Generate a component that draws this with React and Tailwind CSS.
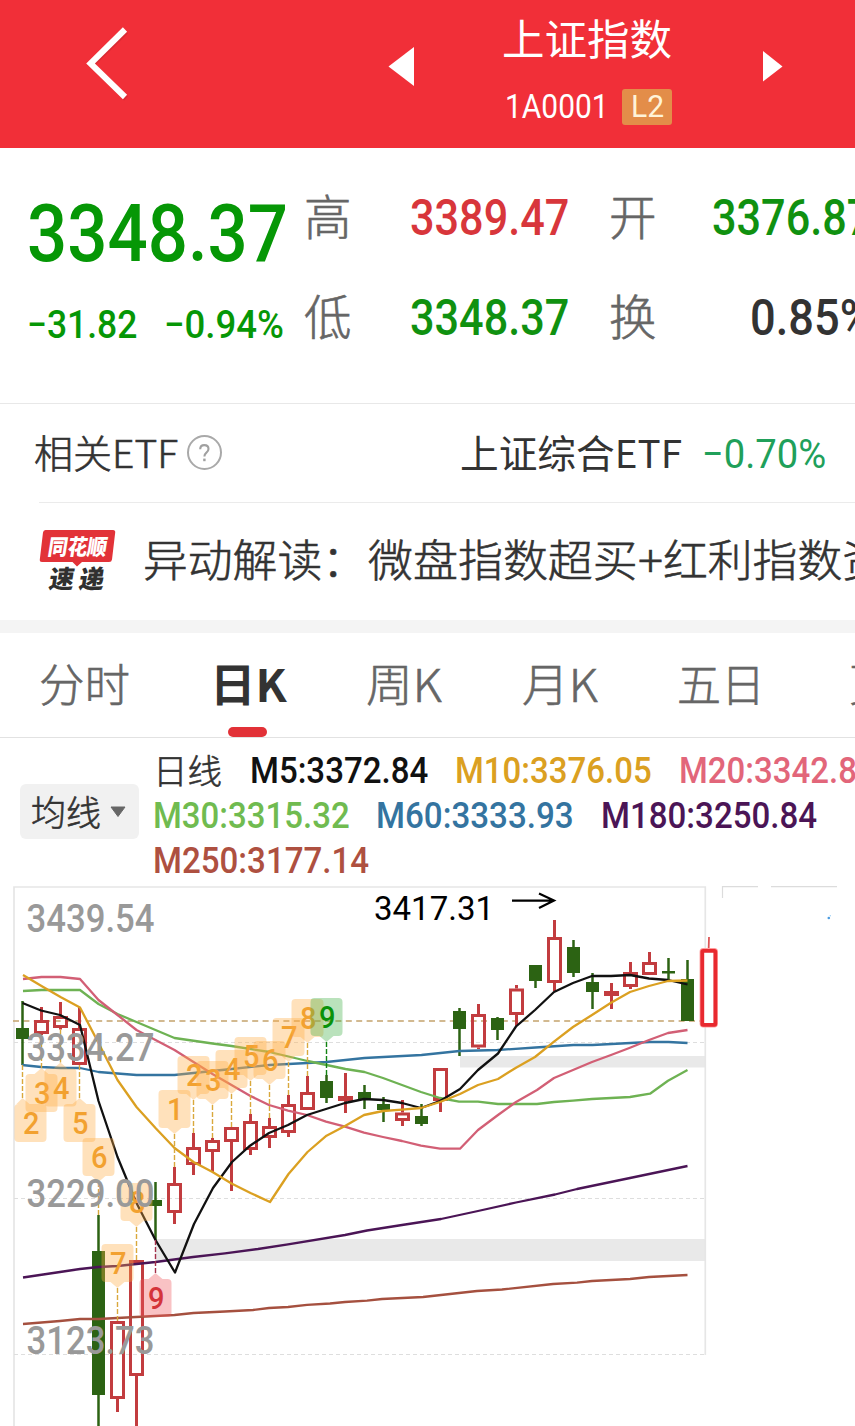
import { useLayoutEffect, useRef } from "react";

// Text stretched or narrowed to fill the width of its own box.
function Fit({ className = "", children }) {
  const box = useRef(null);
  const text = useRef(null);
  useLayoutEffect(() => {
    const ratio = box.current.clientWidth / text.current.offsetWidth;
    text.current.style.transform = `scaleX(${ratio})`;
  }, [children]);
  return (
    <span className={`block shrink-0 whitespace-nowrap ${className}`}>
      <span ref={box} className="block w-full">
        <span ref={text} className="inline-block origin-left whitespace-pre align-top">{children}</span>
      </span>
    </span>
  );
}

const NUM = "font-[Roboto,'Noto_Sans_CJK_SC',sans-serif]";
// A weight between light and regular.
const THIN = "font-light [-webkit-text-stroke:0.6px_currentColor]";

const RED = "#c23c3f";
const GREEN = "#2c6313";
const step = (i) => 22.5 + 19 * i;

// [kind, high, body top, body bottom, low]
const candles = [
  ["g", 1001, 1028, 1039, 1065], ["r", 1007, 1020, 1034, 1035], ["r", 1002, 1016, 1028, 1029.5],
  ["r", 1007, 1028, 1065, 1065], ["g", 1215, 1251, 1395, 1430], ["r", 1321, 1321, 1399, 1412],
  ["r", 1260, 1260, 1376, 1430], ["g", 1182, 1200, 1206, 1240], ["r", 1167, 1183, 1213, 1224],
  ["r", 1133, 1147, 1165, 1175], ["r", 1138, 1140, 1152, 1172], ["r", 1127, 1127, 1142, 1191],
  ["r", 1114, 1121, 1150, 1155], ["r", 1118, 1126, 1138, 1148], ["r", 1095, 1104, 1133, 1137],
  ["r", 1076, 1092, 1110, 1110], ["g", 1075, 1081, 1098, 1103], ["p", 1073, 1096, 1101, 1113],
  ["g", 1085, 1092, 1099, 1109], ["g", 1097, 1104, 1110, 1122], ["r", 1100, 1112.5, 1121, 1126],
  ["g", 1104, 1116, 1124, 1126], ["r", 1068, 1068, 1101, 1112], ["g", 1008, 1011, 1029, 1056],
  ["r", 1004, 1014, 1047.5, 1049], ["g", 1017, 1018, 1030, 1040], ["r", 985, 988.5, 1015, 1026],
  ["g", 965, 965, 981, 988], ["r", 920, 937, 983, 991], ["g", 940, 947, 973, 977],
  ["g", 973, 982, 992, 1009], ["p", 983, 991, 996, 1009], ["r", 962, 972, 987, 989],
  ["r", 952, 962, 975, 975], ["g", 958, 971, 973.5, 980], ["g", 960, 979, 1021, 1021],
];

const averages = [
  ["#a5503f", "23,1324 60,1321 80,1319 98.5,1319 136,1317 174.5,1315 193.5,1313 225,1311.5 253,1310 269,1308 288,1307 307,1304.8 330,1303.5 345,1302 367,1300.7 382,1299 423,1297 477,1291 502,1289.5 553,1284 577,1282.7 592,1281 630,1279 649,1277 687.5,1275"],
  ["#4b1556", "23,1277.5 60,1272 80,1269 98.5,1267 117.5,1266 155.5,1262 193,1257 225,1253.3 258,1249 288,1244.3 345,1235 367,1230.5 402,1225 441,1219 478,1211 516,1202.5 555,1194.5 577,1189 630,1178 687.5,1166"],
  ["#3474a0", "22,1065 41,1067 60.5,1068 80,1068 98.5,1072 136.5,1075 174.5,1075 231.5,1069 269.5,1065 326.5,1062 364.5,1058 421.5,1055 459.5,1051 497.5,1050 535.5,1047.5 573.5,1045 592.5,1045 649.5,1042 668.5,1042 687.5,1043"],
  ["#6eb253", "23,991 41.5,990 80,990 98.5,1004 117.5,1014 136.5,1022 174.5,1038 212.5,1043.5 231.5,1046 269.5,1052 307.5,1061 326.5,1065 345.5,1069 364.5,1072 383,1078 402,1085 421,1092 440,1098 459,1101.7 478,1101.7 498,1104 537,1104 554,1102 573,1100.7 592,1099 630,1097 650,1093.7 668,1080.7 687.5,1070"],
  ["#d25f75", "23,979 41.5,977 60.5,977 80,979 98.5,1000 117.5,1015 136.5,1030 155.5,1040 174.5,1050 193.5,1062 212.5,1074 231.5,1085 250,1095.7 269,1105 288,1110.7 307,1115 326,1121.7 345,1126.7 364,1132.7 383,1137 402,1141 421,1145.7 440,1148.7 460,1148.7 478,1130 498,1115 516,1102 537,1090 554,1078 573,1070 592,1062 611,1055 630,1047.7 649,1040 668,1033 687.5,1030"],
  ["#111111", "22.5,1003 41,1010.5 60,1015 80,1025 98.5,1101 117.5,1157 136.5,1203 155.5,1240 175,1272.5 194,1224 213,1188 232,1162 250,1145.7 269,1133 288,1125 307,1115 326,1109 345,1103 364,1099 383,1100 402,1103 421,1108 440,1101 460,1089 478,1070 498,1053.5 516,1026.5 535,1010 554,992 573,983 592,976 611,976 630,975 649,978.5 668,980 687.5,984.5"],
  ["#dba021", "23,975 41.5,986 60.5,997 80,1007.5 98.5,1043 117.5,1080 136.5,1107 155.5,1128 174.5,1148 193.5,1162 212.5,1172 231.5,1183.5 250.5,1193 270,1202 288.5,1174 307.5,1152 326.5,1135.7 345,1126 364,1115 383,1111 402,1109.7 421,1108 440,1102 460,1094 478,1085 498,1079 516,1067.7 535,1057 554,1041.7 573,1027 592,1015 611,1002.7 630,992 649,986 668,981 687.5,980.5"],
];

// [digit, candle index, points up, tone, sideways shift]
const marks = [
  ["2", 0, true, "o", 8], ["3", 1, true, "o"], ["4", 2, true, "o"], ["5", 3, true, "o"],
  ["6", 4, false, "o"], ["7", 5, false, "o"], ["8", 6, false, "o"], ["9", 7, true, "r"],
  ["1", 8, false, "o"], ["2", 9, false, "o"], ["3", 10, false, "o"], ["4", 11, false, "o"],
  ["5", 12, false, "o"], ["6", 13, false, "o"], ["7", 14, false, "o"], ["8", 15, false, "o"],
  ["9", 16, false, "g"],
];
const tones = {
  o: ["#ffad42", "#f2a130", "#d9a83c"],
  r: ["#ee555c", "#d4343a", "#a3304a"],
  g: ["#3fae46", "#0a920a", "#128312"],
};

function Candle({ data, x }) {
  const [kind, high, top, bottom, low] = data;
  if (kind === "g")
    return (
      <g fill={GREEN}>
        <rect x={x - 1.25} y={high} width="2.5" height={low - high} />
        <rect x={x - 6.5} y={top} width="13" height={bottom - top} />
      </g>
    );
  if (kind === "p")
    return (
      <g fill={RED}>
        <rect x={x - 1.5} y={high} width="3" height={low - high} />
        <rect x={x - 7.5} y={top} width="15" height={bottom - top} />
      </g>
    );
  return (
    <g fill={RED}>
      <rect x={x - 1.5} y={high} width="3" height={top - high} />
      <rect x={x - 1.5} y={bottom} width="3" height={low - bottom} />
      <rect x={x - 6} y={top + 1.5} width="12" height={bottom - top - 3} fill="none" stroke={RED} strokeWidth="3" />
    </g>
  );
}

function Mark({ data }) {
  const [digit, index, up, tone, shift = 0] = data;
  const x = step(index);
  const [fill, ink, dash] = tones[tone];
  const edge = up ? candles[index][4] : candles[index][1];
  const tip = up ? edge + 33 : edge - 33;
  const top = up ? tip + 6 : tip - 44;
  const l = x - 16 + shift;
  const r = x + 16 + shift;
  const b = top + 38;
  const tl = Math.max(x - 7, l + 2);
  const d = up
    ? `M${l + 4},${top} L${tl},${top} L${x},${tip} L${x + 7},${top} L${r - 4},${top} Q${r},${top} ${r},${top + 4} V${b - 4} Q${r},${b} ${r - 4},${b} H${l + 4} Q${l},${b} ${l},${b - 4} V${top + 4} Q${l},${top} ${l + 4},${top}Z`
    : `M${l + 4},${top} H${r - 4} Q${r},${top} ${r},${top + 4} V${b - 4} Q${r},${b} ${r - 4},${b} H${x + 7} L${x},${tip} L${x - 7},${b} H${l + 4} Q${l},${b} ${l},${b - 4} V${top + 4} Q${l},${top} ${l + 4},${top}Z`;
  return (
    <g>
      <line x1={x} x2={x} y1={tip} y2={edge} stroke={dash} strokeWidth="1.4" strokeDasharray="5 2" />
      <path d={d} fill={fill} fillOpacity="0.36" />
      <text x={x + shift - 7.5} y={top + 30} fontSize="31" fontWeight="500" fill={ink} textLength="16.5" lengthAdjust="spacingAndGlyphs">{digit}</text>
    </g>
  );
}

function Chart() {
  const scale = [["3439.54", 932], ["3334.27", 1061], ["3229.00", 1207], ["3123.73", 1354]];
  return (
    <svg className={`block h-[540px] w-[855px] ${NUM}`} viewBox="0 886 855 540">
      <rect x="460" y="1056" width="246" height="11.5" fill="#e9e9e9" />
      <rect x="155" y="1239" width="551" height="22" fill="#e9e9e9" />
      <path d="M14,1430 V887 H705.3 V1355" fill="none" stroke="#e6e6e6" strokeWidth="1.7" />
      <path d="M14,1042.5 H705 M14,1198.5 H705 M14,1354.5 H705" stroke="#dedede" strokeWidth="1" strokeDasharray="4 3" />
      <path d="M13,1021 H705" stroke="#c4a26c" strokeWidth="1.6" strokeDasharray="6 4.4" />
      <path d="M722.5,898 V886.7 H758 M771,886.7 H837" fill="none" stroke="#dcdcdc" strokeWidth="1.2" />
      {candles.map((c, i) => <Candle key={i} data={c} x={step(i)} />)}
      {averages.map(([color, points]) => (
        <polyline key={color} points={points} fill="none" stroke={color} strokeWidth="2.3" strokeLinejoin="round" />
      ))}
      {marks.map((m, i) => <Mark key={i} data={m} />)}
      {scale.map(([label, y]) => (
        <text key={label} x="26.5" y={y} fontSize="39" fontWeight="500" fill="#999999" textLength="128" lengthAdjust="spacingAndGlyphs">{label}</text>
      ))}
      <text x="374" y="920" fontSize="34" fill="#000" textLength="120" lengthAdjust="spacingAndGlyphs">3417.31</text>
      <path d="M512,900.6 H554 M539,893.5 L554,900.6 L539,908" fill="none" stroke="#000" strokeWidth="2.2" />
      <path d="M709,937 L708.6,950" stroke="#dd5555" strokeWidth="1.8" />
      <rect x="702.3" y="950.8" width="13" height="74" rx="1" fill="#fff" stroke="#ff9c9c" strokeWidth="5.4" />
      <rect x="702.3" y="950.8" width="13" height="74" rx="1" fill="#fff" stroke="#e8292f" strokeWidth="3.8" />
      <circle cx="828.8" cy="918" r="1.3" fill="#4a9be0" />
      <circle cx="830.3" cy="915.8" r="0.7" fill="#9fd0f5" />
    </svg>
  );
}

function Header() {
  return (
    <header className="flex h-[148px] bg-[#f12f38] text-white">
      <svg className="h-[148px] w-[502px] shrink-0" viewBox="0 0 502 148">
        <path d="M125,30 L90.5,63.5 L125,97" fill="none" stroke="#b8252c" strokeWidth="5.5" opacity="0.4" transform="translate(1 1.5)" />
        <path d="M125,29.5 L90.5,63.5 L125,97" fill="none" stroke="#fff" strokeWidth="6" />
        <path d="M388.5,66.5 L414,47 V86Z" fill="#fff" />
      </svg>
      <div className="flex w-[171px] shrink-0 flex-col">
        <div className="mt-[9px] h-[56px] text-[42.5px]/[56px]">上证指数</div>
        <div className="mt-[23px] flex h-[38px] items-center">
          <Fit className={`ml-[3px] w-[104px] text-[32.5px]/[40px] ${NUM}`}>1A0001</Fit>
          <div className="ml-[13px] flex h-9 w-[50px] items-center justify-center rounded-[3px] bg-[#e38d49]">
            <Fit className={`w-[33px] text-[31px]/[36px] text-[#fff3d8] ${NUM}`}>L2</Fit>
          </div>
        </div>
      </div>
      <svg className="h-[148px] w-[182px] shrink-0" viewBox="673 0 182 148">
        <path d="M763,51 V81.5 L782.5,66.5Z" fill="#fff" />
      </svg>
    </header>
  );
}

function Quote() {
  return (
    <section className="flex h-[256px] overflow-hidden border-b border-[#e8e8e8]">
      <div className="flex w-[304px] shrink-0 flex-col pl-[27px] text-[#069706]">
        <Fit className={`mt-[38px] w-[261px] text-[80px]/[96px] font-medium ${NUM}`}>3348.37</Fit>
        <div className={`mt-[19px] flex font-medium text-[39px]/[48px] ${NUM}`}>
          <Fit className="w-[110px]">−31.82</Fit>
          <Fit className="ml-[27px] w-[120px]">−0.94%</Fit>
        </div>
      </div>
      <div className={`grid h-[200px] shrink-0 grid-cols-[106px_199px_103px_160px] grid-rows-[100px_100px] pt-[20px] text-[47.5px]/[93px] text-[#666] ${THIN}`}>
        <span>高</span>
        <Fit className={`w-[159px] text-[50px]/[101px] font-medium text-[#d8363b] [-webkit-text-stroke:0] ${NUM}`}>3389.47</Fit>
        <span>开</span>
        <Fit className={`w-[159px] text-[50px]/[101px] font-medium text-[#109110] [-webkit-text-stroke:0] ${NUM}`}>3376.87</Fit>
        <span>低</span>
        <Fit className={`w-[159px] text-[50px]/[101px] font-medium text-[#109110] [-webkit-text-stroke:0] ${NUM}`}>3348.37</Fit>
        <span>换</span>
        <Fit className={`ml-[38px] w-[123px] text-[50px]/[101px] font-medium text-[#333] [-webkit-text-stroke:0] ${NUM}`}>0.85%</Fit>
      </div>
    </section>
  );
}

function Related() {
  return (
    <section className="flex h-[98px] items-center text-[#333]">
      <Fit className={`-mt-1 ml-[34px] w-[144px] text-[38.5px]/[86px] ${THIN}`}>相关ETF</Fit>
      <svg className="ml-[9px] size-[36px] shrink-0" viewBox="0 0 36 36">
        <circle cx="17.5" cy="17.5" r="16.5" fill="none" stroke="#a9a9a9" strokeWidth="2" />
        <path d="M13.2,14.2 Q13.2,10.1 17.3,10.1 Q21.5,10.1 21.5,13.9 Q21.5,16 19.2,17.8 Q17.4,19.2 17.4,21.5" fill="none" stroke="#a0a0a0" strokeWidth="2.1" />
        <rect x="16.2" y="23.6" width="2.4" height="2.6" fill="#a0a0a0" />
      </svg>
      <Fit className="-mt-1 ml-[237px] w-[222px] text-[38.5px]/[86px]">上证综合ETF</Fit>
      <Fit className={`mt-[3px] ml-[20px] w-[124px] text-[40px]/[90px] text-[#20a05a] ${NUM}`}>−0.70%</Fit>
    </section>
  );
}

function News() {
  return (
    <section className="flex h-[118px] flex-col overflow-hidden">
      <div className="ml-[39px] h-px shrink-0 bg-[#ebebeb]" />
      <div className="flex">
        <svg className="mt-[25px] ml-[39px] h-[66px] w-[78px] shrink-0 font-['Noto_Sans_CJK_SC',sans-serif]" viewBox="39 528 78 66">
          <path d="M45.5,530 H113 Q115.5,530 115.2,532.5 L112,559.5 Q111.7,562 109,562 H82 L77,566.5 L72.5,562 H42 Q39.5,562 39.8,559.5 L43,532.5 Q43.3,530 45.5,530Z" fill="#e23238" />
          <text transform="translate(47 554.5) skewX(-9)" fontSize="22" fontWeight="900" fill="#fff" textLength="59" lengthAdjust="spacingAndGlyphs">同花顺</text>
          <text transform="translate(48 587.5) skewX(-9)" fontSize="25" fontWeight="900" fill="#303030" textLength="55" lengthAdjust="spacing">速递</text>
        </svg>
        <div className={`ml-[26px] flex shrink-0 text-[44.8px]/[109px] whitespace-pre text-[#333] ${THIN}`}>
          <Fit className="w-[179px]">异动解读</Fit>
          <span className="w-[46px]">：</span>
          <Fit className="w-[270px]">微盘指数超买</Fit>
          <Fit className="w-[25px]">+</Fit>
          <Fit className="w-[224px]">红利指数资</Fit>
        </div>
      </div>
    </section>
  );
}

function Tabs() {
  return (
    <nav className={`flex h-[105px] overflow-hidden border-b border-[#e2e2e2] text-[45px]/[99px] text-[#666] ${THIN}`}>
      <Fit className="ml-[39px] w-[91px]">分时</Fit>
      <div className="ml-[79px] flex w-[77px] shrink-0 flex-col items-center text-[#333]">
        <Fit className="ml-[2px] h-[94px] w-[77px] font-bold [-webkit-text-stroke:0]">日K</Fit>
        <i className="h-[10px] w-[39px] rounded-full bg-[#e23137]" />
      </div>
      <Fit className="ml-[80px] w-[76px]">周K</Fit>
      <Fit className="ml-[80px] w-[76px]">月K</Fit>
      <Fit className="ml-[79px] w-[88px]">五日</Fit>
      <span className="ml-[84px] w-[45px] shrink-0">更</span>
    </nav>
  );
}

function Legend() {
  return (
    <section className="flex h-[148px] overflow-hidden">
      <button className="mt-[46px] ml-[20px] flex h-[55px] w-[119px] shrink-0 items-center rounded-md bg-[#f1f1f1] text-[#333]">
        <span className={`-mt-0.5 ml-[11px] text-[35px]/[50px] ${THIN}`}>均线</span>
        <svg className="ml-[9px] h-[12px] w-[16px]" viewBox="0 0 16 12">
          <path d="M1,1 H15 L8,10.5Z" fill="#666" stroke="#666" strokeWidth="1" strokeLinejoin="round" />
        </svg>
      </button>
      <div className={`ml-[14px] flex shrink-0 flex-col pt-[11px] text-[36px]/[45px] font-medium ${NUM}`}>
        <div className="flex h-[45px]">
          <span className="w-[70px] font-['Noto_Sans_CJK_SC',sans-serif] text-[34.5px]/[40px] font-light text-[#333] [-webkit-text-stroke:0.6px_currentColor]">日线</span>
          <Fit className="ml-[27px] w-[178px] text-[#111]">M5:3372.84</Fit>
          <Fit className="ml-[27px] w-[197px] text-[#dba021]">M10:3376.05</Fit>
          <Fit className="ml-[27px] w-[197px] text-[#e2667a]">M20:3342.83</Fit>
        </div>
        <div className="flex h-[45px]">
          <Fit className="w-[197px] text-[#70bb50]">M30:3315.32</Fit>
          <Fit className="ml-[26px] w-[198px] text-[#3474a0]">M60:3333.93</Fit>
          <Fit className="ml-[27px] w-[216px] text-[#4b1556]">M180:3250.84</Fit>
        </div>
        <Fit className="w-[216px] text-[#ae5040]">M250:3177.14</Fit>
      </div>
    </section>
  );
}

export default function App() {
  return (
    <main className="h-[1426px] w-[855px] overflow-hidden bg-white font-['Noto_Sans_CJK_SC',sans-serif]">
      <Header />
      <Quote />
      <Related />
      <News />
      <div className="h-[13px] bg-[#f4f4f4]" />
      <Tabs />
      <Legend />
      <Chart />
    </main>
  );
}
